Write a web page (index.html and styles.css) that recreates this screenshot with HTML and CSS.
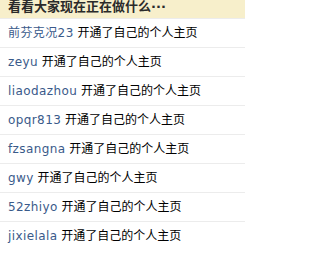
FILE: index.html
```html
<!DOCTYPE html>
<html lang="zh-CN">
<head>
<meta charset="utf-8">
<link rel="stylesheet" href="styles.css">
</head>
<body>
<div class="panel">
  <div class="head">看看大家现在正在做什么···</div>
  <ul class="feed">
    <li class="item"><a class="user">前芬克况23</a> 开通了自己的个人主页</li>
    <li class="item"><a class="user">zeyu</a> 开通了自己的个人主页</li>
    <li class="item"><a class="user">liaodazhou</a> 开通了自己的个人主页</li>
    <li class="item"><a class="user">opqr813</a> 开通了自己的个人主页</li>
    <li class="item"><a class="user">fzsangna</a> 开通了自己的个人主页</li>
    <li class="item"><a class="user">gwy</a> 开通了自己的个人主页</li>
    <li class="item"><a class="user">52zhiyo</a> 开通了自己的个人主页</li>
    <li class="item"><a class="user">jixielala</a> 开通了自己的个人主页</li>
  </ul>
</div>
</body>
</html>
```
FILE: styles.css
```css
html, body {
  margin: 0;
  padding: 0;
  background: #fff;
}
.panel {
  width: 245px;
  height: 254px;
  overflow: hidden;
  font-family: "DejaVu Sans", "Noto Sans CJK SC", sans-serif;
  font-size: 12px;
}
.head {
  height: 18px;
  line-height: 14px;
  background: #f7efcb;
  color: #2a2a2a;
  font-weight: bold;
  font-size: 13px;
  padding-left: 8px;
  box-sizing: border-box;
}
.feed {
  list-style: none;
  margin: 0;
  padding: 0;
}
.item {
  height: 28px;
  line-height: 28px;
  border-top: 1px solid #ececec;
  padding-left: 8px;
  color: #000;
  white-space: nowrap;
}
.user {
  color: #3a5a8a;
  letter-spacing: 0.4px;
}
```
